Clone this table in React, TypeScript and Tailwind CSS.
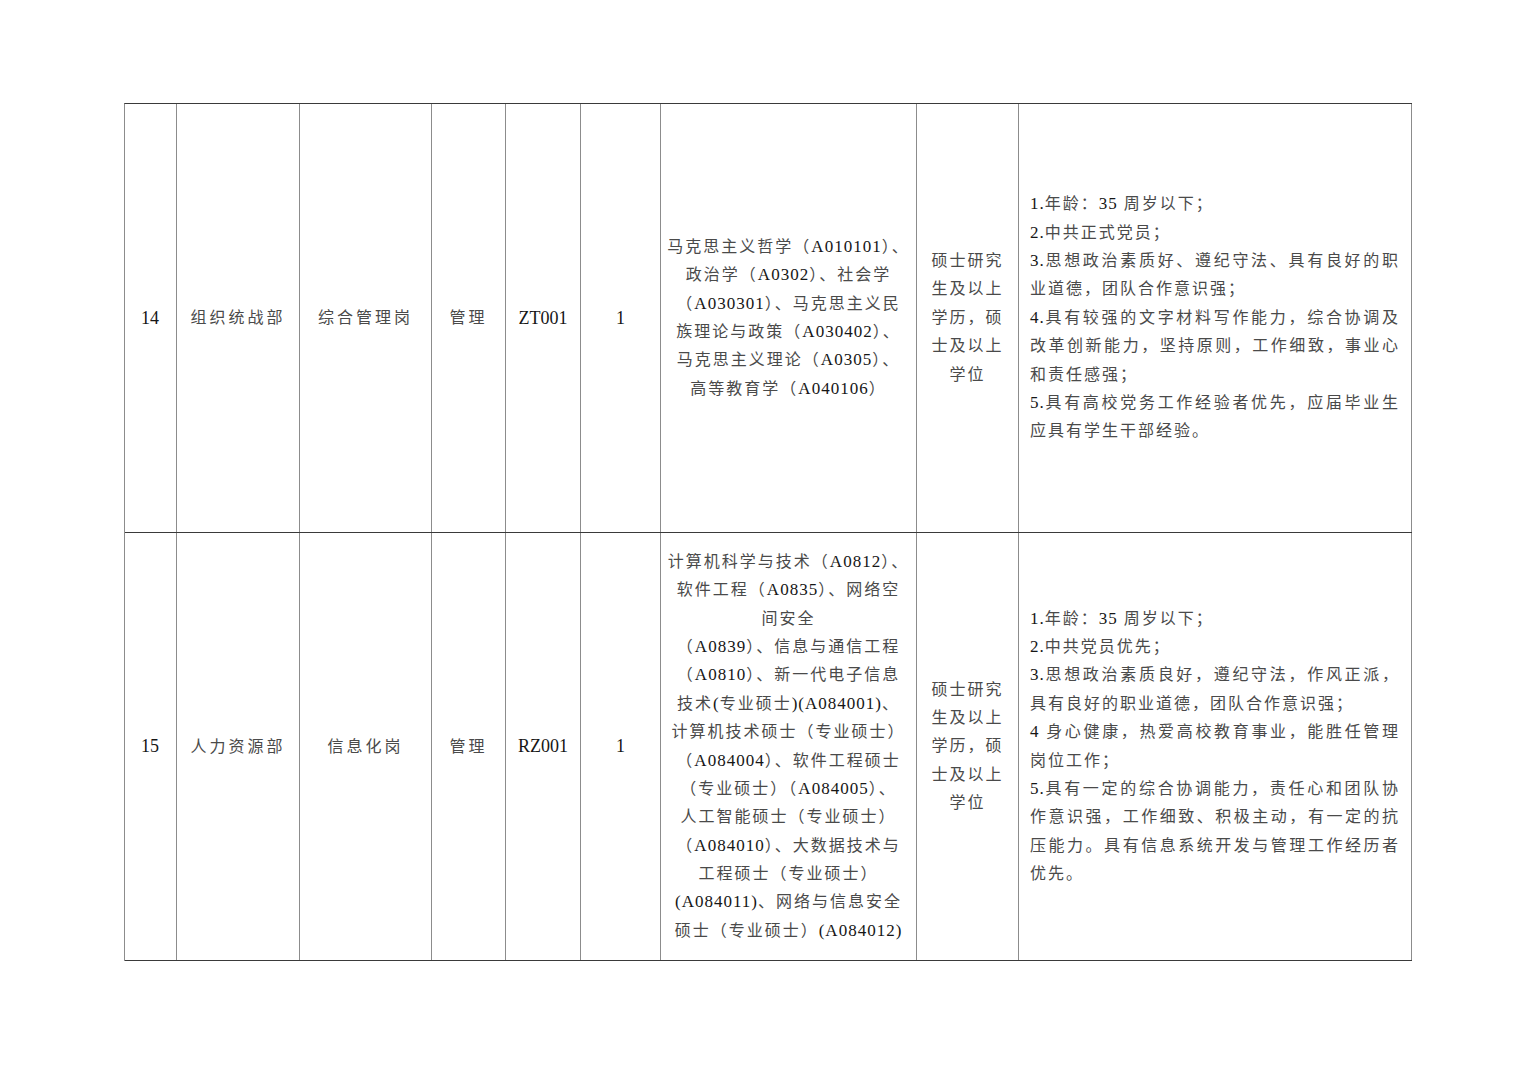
import React from "react";

const V = "border-r border-[#8c8c8c]";

function Txt({ s }: { s: string }) {
  const parts = s.split(/([A-Za-z0-9.()]+)/).filter((p) => p.length > 0);
  return (
    <>
      {parts.map((p, i) =>
        /^[A-Za-z0-9.()]+$/.test(p) ? (
          <span key={i} className="text-[17px] tracking-[1px] text-[#161616]">
            {p}
          </span>
        ) : (
          <span key={i} className="text-[#4a4a4a]">
            {p}
          </span>
        )
      )}
    </>
  );
}

function Cell({ w, children, align = "center" }: { w: string; children?: React.ReactNode; align?: "center" | "left" }) {
  return (
    <div
      className={`${w} shrink-0 ${V} flex items-center ${align === "center" ? "justify-center text-center" : "justify-start text-left px-[11px]"}`}
    >
      {children}
    </div>
  );
}

function Lines({ lines, justify = false }: { lines: { t: string; full?: boolean }[]; justify?: boolean }) {
  return (
    <div className={`leading-[28.4px] ${justify ? "w-full" : ""}`}>
      {lines.map((l, i) => (
        <div
          key={i}
          className={`whitespace-nowrap h-[28.4px] ${justify && l.full ? "[text-align-last:justify] text-justify" : ""}`}
        >
          <Txt s={l.t} />
        </div>
      ))}
    </div>
  );
}

const widths = ["w-[52px]", "w-[123px]", "w-[132px]", "w-[74px]", "w-[75px]", "w-[80px]", "w-[256px]", "w-[102px]", "w-[393px]"];

type RowData = {
  no: string;
  dept: string;
  post: string;
  type: string;
  code: string;
  num: string;
  major: string[];
  degree: string[];
  req: { t: string; full?: boolean }[];
  h: string;
};

const rows: RowData[] = [
  {
    no: "14",
    dept: "组织统战部",
    post: "综合管理岗",
    type: "管理",
    code: "ZT001",
    num: "1",
    major: [
      "马克思主义哲学（A010101）、",
      "政治学（A0302）、社会学",
      "（A030301）、马克思主义民",
      "族理论与政策（A030402）、",
      "马克思主义理论（A0305）、",
      "高等教育学（A040106）",
    ],
    degree: ["硕士研究", "生及以上", "学历，硕", "士及以上", "学位"],
    req: [
      { t: "1.年龄：35 周岁以下；" },
      { t: "2.中共正式党员；" },
      { t: "3.思想政治素质好、遵纪守法、具有良好的职", full: true },
      { t: "业道德，团队合作意识强；" },
      { t: "4.具有较强的文字材料写作能力，综合协调及", full: true },
      { t: "改革创新能力，坚持原则，工作细致，事业心", full: true },
      { t: "和责任感强；" },
      { t: "5.具有高校党务工作经验者优先，应届毕业生", full: true },
      { t: "应具有学生干部经验。" },
    ],
    h: "h-[428px]",
  },
  {
    no: "15",
    dept: "人力资源部",
    post: "信息化岗",
    type: "管理",
    code: "RZ001",
    num: "1",
    major: [
      "计算机科学与技术（A0812）、",
      "软件工程（A0835）、网络空",
      "间安全",
      "（A0839）、信息与通信工程",
      "（A0810）、新一代电子信息",
      "技术(专业硕士)(A084001)、",
      "计算机技术硕士（专业硕士）",
      "（A084004）、软件工程硕士",
      "（专业硕士）（A084005）、",
      "人工智能硕士（专业硕士）",
      "（A084010）、大数据技术与",
      "工程硕士（专业硕士）",
      "(A084011)、网络与信息安全",
      "硕士（专业硕士）(A084012)",
    ],
    degree: ["硕士研究", "生及以上", "学历，硕", "士及以上", "学位"],
    req: [
      { t: "1.年龄：35 周岁以下；" },
      { t: "2.中共党员优先；" },
      { t: "3.思想政治素质良好，遵纪守法，作风正派，", full: true },
      { t: "具有良好的职业道德，团队合作意识强；" },
      { t: "4 身心健康，热爱高校教育事业，能胜任管理", full: true },
      { t: "岗位工作；" },
      { t: "5.具有一定的综合协调能力，责任心和团队协", full: true },
      { t: "作意识强，工作细致、积极主动，有一定的抗", full: true },
      { t: "压能力。具有信息系统开发与管理工作经历者", full: true },
      { t: "优先。" },
    ],
    h: "h-[427px]",
  },
];

export default function App() {
  return (
    <div className="w-[1528px] h-[1080px] bg-white pt-[103px] pl-[124px] font-['Liberation_Serif','Noto_Sans_CJK_SC',serif] text-[16px] tracking-[2px] text-[#4a4a4a]">
      <div className="w-[1288px] border-t border-l border-t-[#3a3a3a] border-l-[#8c8c8c]">
        {rows.map((r, i) => (
          <div key={i} className={`flex ${r.h} box-content border-b border-[#3a3a3a]`}>
            <Cell w={widths[0]}>
              <span className="text-[18px] tracking-normal text-[#161616] pr-[1px]">{r.no}</span>
            </Cell>
            <Cell w={widths[1]}>
              <span className="tracking-[3px]">{r.dept}</span>
            </Cell>
            <Cell w={widths[2]}>
              <span className="tracking-[3px]">{r.post}</span>
            </Cell>
            <Cell w={widths[3]}>
              <span className="tracking-[3px]">{r.type}</span>
            </Cell>
            <Cell w={widths[4]}>
              <span className="text-[18px] tracking-normal text-[#161616]">{r.code}</span>
            </Cell>
            <Cell w={widths[5]}>
              <span className="text-[18px] tracking-normal text-[#161616]">{r.num}</span>
            </Cell>
            <Cell w={widths[6]}>
              <Lines lines={r.major.map((t) => ({ t }))} />
            </Cell>
            <Cell w={widths[7]}>
              <Lines lines={r.degree.map((t) => ({ t }))} />
            </Cell>
            <Cell w={widths[8]} align="left">
              <Lines lines={r.req} justify />
            </Cell>
          </div>
        ))}
      </div>
    </div>
  );
}
